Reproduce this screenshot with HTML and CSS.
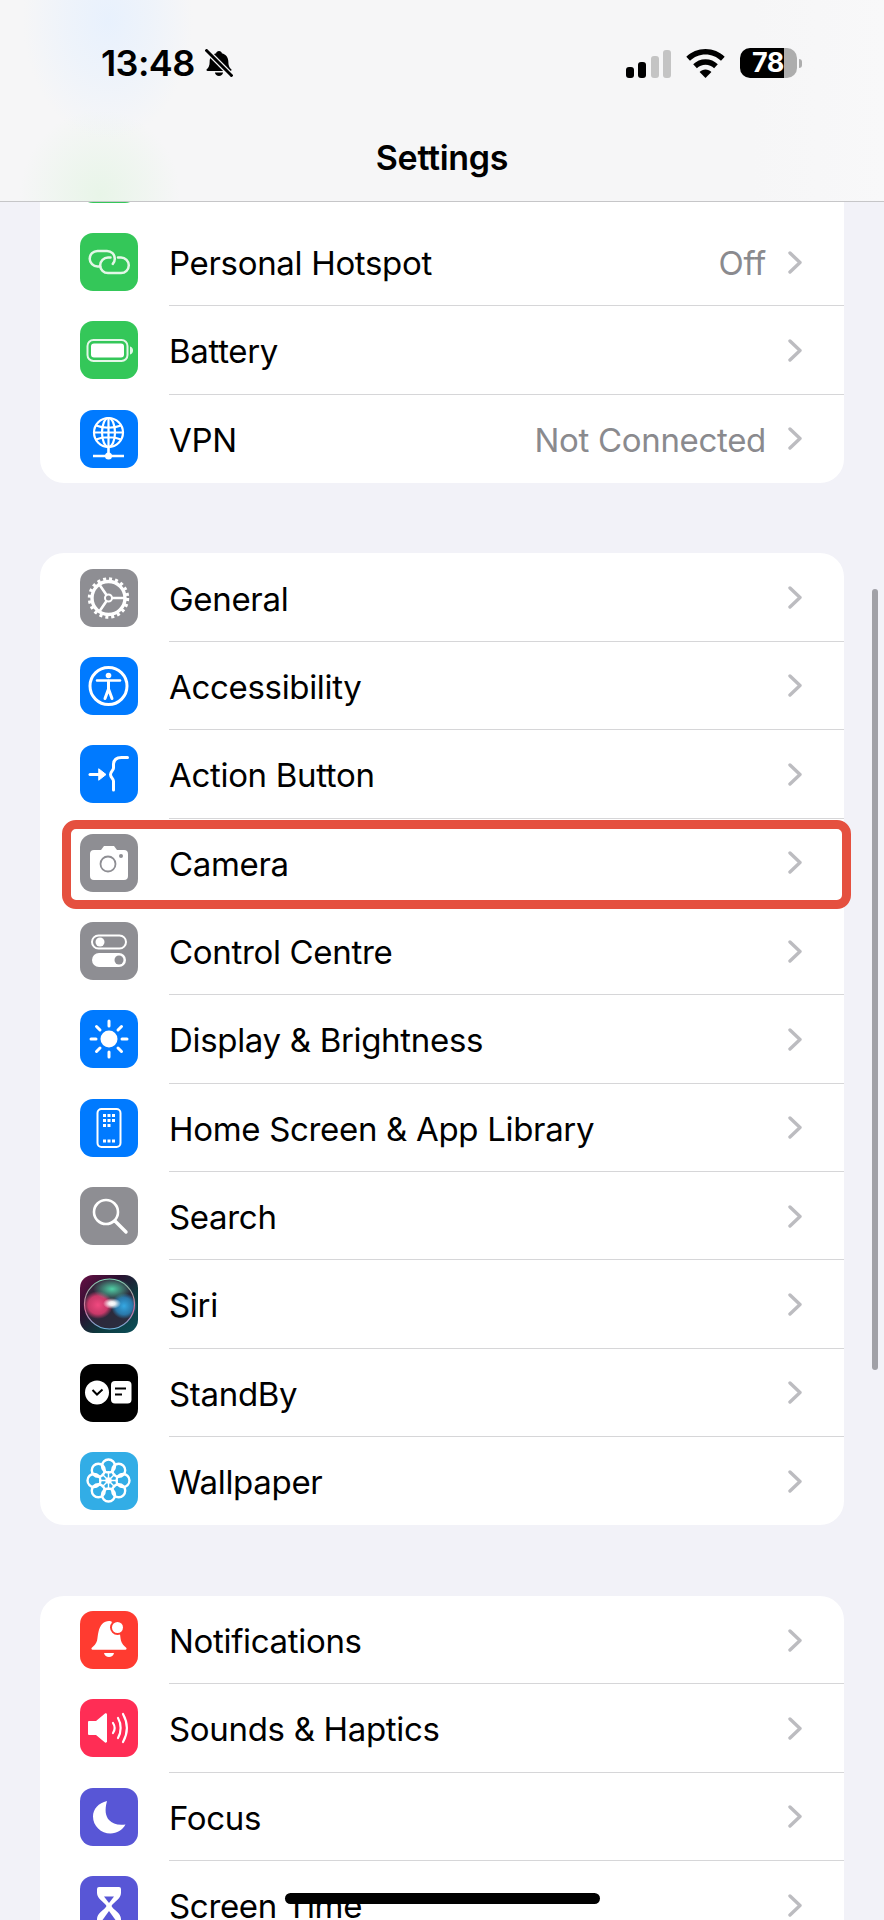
FILE: index.html
```html
<!DOCTYPE html>
<html lang="en">
<head>
<meta charset="utf-8">
<title>Settings</title>
<link rel="stylesheet" href="styles.css">
</head>
<body>
<div class="phone">
  <header class="nav">
    <div class="status">
      <div class="status-left">
        <span class="time">13:48</span>
        <svg class="bell" viewBox="2 0 24 28" preserveAspectRatio="none"><path d="M14 2c1.400 0 2.300 1 2.400 2.200C20 5.300 22 8.500 22 12.500c0 4 .8 6 2.500 7.800.6.700.2 1.700-.8 1.700H4.300c-1 0-1.400-1-.8-1.700C5.200 18.500 6 16.500 6 12.500 6 8.500 8 5.300 11.600 4.200 11.700 3 12.600 2 14 2zM10.500 23.500h7c-.3 2-1.700 3.500-3.500 3.500s-3.200-1.500-3.500-3.500z" fill="#000"/><path d="M2.500 0.500 25.500 27.500" stroke="#f6f6f7" stroke-width="5"/><path d="M2.500 0.500 25.500 27.500" stroke="#000" stroke-width="2.600"/></svg>
      </div>
      <div class="status-right">
        <div class="signal"><i class="b1"></i><i class="b2"></i><i class="b3"></i><i class="b4"></i></div>
        <svg class="wifi" viewBox="0 0 39 29"><path d="M19.500 0C27 0 33.700 3 38.700 7.800L35 11.800C31 7.900 25.500 5.500 19.500 5.500S8 7.900 4 11.800L.3 7.800C5.300 3 12 0 19.500 0z"/><path d="M19.500 10.200c4.800 0 9.100 1.900 12.300 5l-3.700 4c-2.200-2.200-5.300-3.500-8.600-3.500s-6.400 1.300-8.600 3.500l-3.700-4c3.200-3.100 7.500-5 12.300-5z"/><path d="M19.500 20.500c2.300 0 4.400.9 5.900 2.400L19.500 29l-5.900-6.100c1.500-1.500 3.600-2.400 5.900-2.400z"/></svg>
        <div class="battery"><div class="cell"><span class="level">78</span></div><i class="nub"></i></div>
      </div>
    </div>
    <h1 class="title">Settings</h1>
  </header>

  <main class="list">
    <section class="card card-first">
      <div class="row row-clipped">
        <div class="icon green"></div>
      </div>
      <div class="row">
        <div class="icon green">
          <svg viewBox="0 0 58 58" fill="none" stroke="#e3f7e7" stroke-width="2.500" stroke-linecap="round"><path d="M20 33.500H17.500a7.800 7.800 0 0 1 0-15.600H27a7.800 7.800 0 0 1 7.800 7.800c0 2-.8 3.800-2 5.200"/><path d="M38 24.500h3a7.800 7.800 0 0 1 0 15.600H28a7.800 7.800 0 0 1-7.800-7.800 7.800 7.800 0 0 1 7.800-7.800h2.500"/></svg>
        </div>
        <div class="body"><span class="label">Personal Hotspot</span><span class="value">Off</span><svg class="chev" viewBox="0 0 14 23"><path d="M2 2l10 9.500L2 21"/></svg></div>
      </div>
      <div class="row">
        <div class="icon green">
          <svg viewBox="0 0 58 58" fill="none"><rect x="7.500" y="19" width="40" height="21" rx="6" stroke="#e3f7e7" stroke-width="2"/><rect x="11" y="22.500" width="33" height="14" rx="3" fill="#fff"/><path d="M50 25.500c2 .5 3 2 3 4s-1 3.500-3 4z" fill="#e3f7e7"/></svg>
        </div>
        <div class="body"><span class="label">Battery</span><svg class="chev" viewBox="0 0 14 23"><path d="M2 2l10 9.500L2 21"/></svg></div>
      </div>
      <div class="row">
        <div class="icon blue">
          <svg viewBox="0 0 58 58" fill="none" stroke="#fff" stroke-width="2.200"><circle cx="28.500" cy="22.500" r="14.500"/><ellipse cx="28.500" cy="22.500" rx="6.500" ry="14.500"/><path d="M28.500 8v29M16 15.500c7 3 18 3 25 0M16 29.500c7-3 18-3 25 0M14 22.500h29"/><path d="M13 46h31M28.500 37v9" stroke-width="2.600"/><circle cx="28.500" cy="46" r="3.500" fill="#fff" stroke="none"/></svg>
        </div>
        <div class="body"><span class="label">VPN</span><span class="value">Not Connected</span><svg class="chev" viewBox="0 0 14 23"><path d="M2 2l10 9.500L2 21"/></svg></div>
      </div>
    </section>

    <section class="card">
      <div class="row">
        <div class="icon grey">
          <svg viewBox="0 0 58 58" fill="none" stroke="#fff"><circle cx="28.500" cy="29" r="16.500" stroke-width="3.400"/><circle cx="28.500" cy="29" r="19" stroke-width="3.400" stroke-dasharray="3.010 2.960"/><circle cx="28.500" cy="29" r="3.500" stroke-width="2"/><path d="M32 29H45M26.500 26 19 15M26.500 32 19 43" stroke-width="2.600"/></svg>
        </div>
        <div class="body"><span class="label">General</span><svg class="chev" viewBox="0 0 14 23"><path d="M2 2l10 9.500L2 21"/></svg></div>
      </div>
      <div class="row">
        <div class="icon blue">
          <svg viewBox="0 0 58 58" fill="none" stroke="#fff"><circle cx="28.500" cy="29" r="18.500" stroke-width="3"/><circle cx="28.500" cy="18.500" r="2.800" fill="#fff" stroke="none"/><path d="M17 23.500h23" stroke-width="2.500" stroke-linecap="round"/><path d="M28.500 24v8M28.500 32l-3.500 9.500M28.500 32l3.500 9.500" stroke-width="3" stroke-linecap="round"/></svg>
        </div>
        <div class="body"><span class="label">Accessibility</span><svg class="chev" viewBox="0 0 14 23"><path d="M2 2l10 9.500L2 21"/></svg></div>
      </div>
      <div class="row">
        <div class="icon blue">
          <svg viewBox="0 0 58 58" fill="none" stroke="#fff" stroke-linecap="round"><path d="M10 29.500h13" stroke-width="3"/><path d="M19 24l7 5.500-7 5.500z" fill="#fff" stroke-width="1" stroke-linejoin="round"/><path d="M33.500 45V36c0-2.500-3-3.500-3-6.500s3-4 3-6.500v-3c0-5 3-7.500 8-7.500h6" stroke-width="3"/></svg>
        </div>
        <div class="body"><span class="label">Action Button</span><svg class="chev" viewBox="0 0 14 23"><path d="M2 2l10 9.500L2 21"/></svg></div>
      </div>
      <div class="row row-marked">
        <div class="icon grey">
          <svg viewBox="0 0 58 58"><path d="M14 16h7l3-4h10l3 4h7a4 4 0 0 1 4 4v22a4 4 0 0 1-4 4H14a4 4 0 0 1-4-4V20a4 4 0 0 1 4-4z" fill="#fff"/><circle cx="28" cy="30" r="7.500" fill="none" stroke="#8e8e93" stroke-width="1.800"/><circle cx="41" cy="22" r="2" fill="#8e8e93"/></svg>
        </div>
        <div class="body"><span class="label">Camera</span><svg class="chev" viewBox="0 0 14 23"><path d="M2 2l10 9.500L2 21"/></svg></div>
      </div>
      <div class="row">
        <div class="icon grey">
          <svg viewBox="0 0 58 58"><rect x="12" y="13.500" width="34" height="13" rx="6.500" fill="none" stroke="#fff" stroke-width="2"/><circle cx="20" cy="20" r="4.500" fill="#fff"/><rect x="12" y="31" width="34" height="14" rx="7" fill="#fff"/><circle cx="39" cy="38" r="4.500" fill="#8e8e93"/></svg>
        </div>
        <div class="body"><span class="label">Control Centre</span><svg class="chev" viewBox="0 0 14 23"><path d="M2 2l10 9.500L2 21"/></svg></div>
      </div>
      <div class="row">
        <div class="icon blue">
          <svg viewBox="0 0 58 58" fill="#fff" stroke="#fff" stroke-width="3" stroke-linecap="round"><circle cx="29" cy="29" r="8.500" stroke="none"/><path d="M29 11v5M29 42v5M11 29h5M42 29h5M16.500 16.500l3.500 3.500M38 38l3.500 3.500M16.500 41.500l3.500-3.500M38 20l3.500-3.500"/></svg>
        </div>
        <div class="body"><span class="label">Display &amp; Brightness</span><svg class="chev" viewBox="0 0 14 23"><path d="M2 2l10 9.500L2 21"/></svg></div>
      </div>
      <div class="row">
        <div class="icon blue">
          <svg viewBox="0 0 58 58"><rect x="17.500" y="10" width="23" height="38" rx="4" fill="none" stroke="#fff" stroke-width="2"/><path d="M23 15h3v3h-3zM27.500 15h3v3h-3zM32 15h3v3h-3zM23 20h3v3h-3zM27.500 20h3v3h-3zM32 20h3v3h-3zM23 25h3v3h-3zM27.500 25h3v3h-3zM23 40.500h3v3h-3zM27.500 40.500h3v3h-3zM32 40.500h3v3h-3z" fill="#fff"/></svg>
        </div>
        <div class="body"><span class="label">Home Screen &amp; App Library</span><svg class="chev" viewBox="0 0 14 23"><path d="M2 2l10 9.500L2 21"/></svg></div>
      </div>
      <div class="row">
        <div class="icon grey">
          <svg viewBox="0 0 58 58" fill="none" stroke="#fff"><circle cx="26" cy="25" r="12" stroke-width="2.600"/><path d="M35 34l11 11" stroke-width="3.400" stroke-linecap="round"/></svg>
        </div>
        <div class="body"><span class="label">Search</span><svg class="chev" viewBox="0 0 14 23"><path d="M2 2l10 9.500L2 21"/></svg></div>
      </div>
      <div class="row">
        <div class="icon siri">
          <svg viewBox="0 0 58 58" fill="none"><defs><radialGradient id="sp"><stop offset="0" stop-color="#f0497f"/><stop offset=".65" stop-color="#d93b6e" stop-opacity=".9"/><stop offset="1" stop-color="#d93b6e" stop-opacity="0"/></radialGradient><radialGradient id="sb"><stop offset="0" stop-color="#35a9e4"/><stop offset=".65" stop-color="#2a86bd" stop-opacity=".85"/><stop offset="1" stop-color="#2a86bd" stop-opacity="0"/></radialGradient><radialGradient id="sw"><stop offset="0" stop-color="#fff"/><stop offset=".35" stop-color="#fff" stop-opacity=".9"/><stop offset="1" stop-color="#fff" stop-opacity="0"/></radialGradient><radialGradient id="sg"><stop offset="0" stop-color="#4fd0a5"/><stop offset="1" stop-color="#4fd0a5" stop-opacity="0"/></radialGradient><linearGradient id="sr" x1="0" y1="0" x2="0" y2="1"><stop offset="0" stop-color="#7fd6b4"/><stop offset=".6" stop-color="#d86a96"/><stop offset="1" stop-color="#6fb6e0"/></linearGradient></defs><circle cx="29.500" cy="29" r="25" fill="#33283c" fill-opacity=".8"/><ellipse cx="18" cy="30" rx="15" ry="14" fill="url(#sp)"/><ellipse cx="44" cy="31" rx="13" ry="13" fill="url(#sb)"/><ellipse cx="32" cy="14" rx="19" ry="11" fill="url(#sg)"/><ellipse cx="32" cy="28.500" rx="9" ry="5.500" fill="url(#sw)"/><circle cx="29.500" cy="29" r="25" stroke="url(#sr)" stroke-width="1.200"/></svg>
        </div>
        <div class="body"><span class="label">Siri</span><svg class="chev" viewBox="0 0 14 23"><path d="M2 2l10 9.500L2 21"/></svg></div>
      </div>
      <div class="row">
        <div class="icon black">
          <svg viewBox="0 0 58 58"><circle cx="17" cy="28.500" r="12" fill="#fff"/><path d="M12.500 26l4.500 4.500 5.500-5" fill="none" stroke="#000" stroke-width="2"/><rect x="31" y="17" width="20.500" height="22.500" rx="4" fill="#fff"/><path d="M35 24.500h11M35 30.500h7" stroke="#000" stroke-width="2.200"/></svg>
        </div>
        <div class="body"><span class="label">StandBy</span><svg class="chev" viewBox="0 0 14 23"><path d="M2 2l10 9.500L2 21"/></svg></div>
      </div>
      <div class="row">
        <div class="icon sky">
          <svg viewBox="0 0 58 58" fill="none" stroke="#fff" stroke-width="2.400"><circle cx="28.500" cy="14" r="6.500"/><circle cx="38.700" cy="18.300" r="6.500"/><circle cx="43" cy="28.500" r="6.500"/><circle cx="38.700" cy="38.700" r="6.500"/><circle cx="28.500" cy="43" r="6.500"/><circle cx="18.300" cy="38.700" r="6.500"/><circle cx="14" cy="28.500" r="6.500"/><circle cx="18.300" cy="18.300" r="6.500"/><path d="M28.500 19v19M19 28.500h19M21.800 21.800l13.400 13.400M21.800 35.200l13.400-13.400" stroke-width="1.400"/><circle cx="28.500" cy="28.500" r="3.200" fill="#fff" stroke="none"/></svg>
        </div>
        <div class="body"><span class="label">Wallpaper</span><svg class="chev" viewBox="0 0 14 23"><path d="M2 2l10 9.500L2 21"/></svg></div>
      </div>
    </section>

    <section class="card">
      <div class="row">
        <div class="icon red">
          <svg viewBox="0 0 58 58"><path d="M29 10c1.500 0 3 .7 4 1.700 2 2 5 5 6.500 9 .8 3 .8 6 1.500 9 .8 3 3 5 5.200 7 .8.800.3 2-.8 2H12.600c-1.100 0-1.600-1.200-.8-2 2.200-2 4.400-4 5.200-7 .7-3 .7-6 1.500-9C20 14 24 10 29 10z" fill="#fff"/><path d="M24 42h10c-.5 2.500-2.500 4-5 4s-4.500-1.500-5-4z" fill="#fff"/><circle cx="37.500" cy="16.500" r="7.500" fill="#ff3b30"/><circle cx="37.500" cy="16.500" r="5.500" fill="#fff"/></svg>
        </div>
        <div class="body"><span class="label">Notifications</span><svg class="chev" viewBox="0 0 14 23"><path d="M2 2l10 9.500L2 21"/></svg></div>
      </div>
      <div class="row">
        <div class="icon pink">
          <svg viewBox="0 0 58 58" fill="none" stroke="#fff" stroke-linecap="round"><path d="M9 22h7l9-7.500c.7-.5 2 0 2 1v27c0 1-1.300 1.500-2 1L16 36H9a1 1 0 0 1-1-1V23a1 1 0 0 1 1-1z" fill="#fff" stroke="none"/><path d="M33 24c2 3 2 7 0 10" stroke-width="2.200"/><path d="M38 19c3.500 6 3.500 14 0 20" stroke-width="2.200"/><path d="M43 15c5 9 5 19 0 28" stroke-width="2.200"/></svg>
        </div>
        <div class="body"><span class="label">Sounds &amp; Haptics</span><svg class="chev" viewBox="0 0 14 23"><path d="M2 2l10 9.500L2 21"/></svg></div>
      </div>
      <div class="row">
        <div class="icon indigo">
          <svg viewBox="0 0 58 58"><path d="M27 13c-2.500 9-1.500 15 2 19 3.500 4 9 5.500 16.500 4.500C42.500 42 37 45.500 30.500 45.500 21 45.500 13 38 13 28.500 13 21 18.500 15 27 13z" fill="#fff"/></svg>
        </div>
        <div class="body"><span class="label">Focus</span><svg class="chev" viewBox="0 0 14 23"><path d="M2 2l10 9.500L2 21"/></svg></div>
      </div>
      <div class="row">
        <div class="icon indigo">
          <svg viewBox="0 0 58 58"><path d="M19 11h20a2 2 0 0 1 2 2v4c0 6-7.500 9-9.500 13 2 4 9.500 7 9.500 13v3a2 2 0 0 1-2 2H19a2 2 0 0 1-2-2v-3c0-6 7.500-9 9.500-13-2-4-9.500-7-9.500-13v-4a2 2 0 0 1 2-2z" fill="#fff"/><path d="M24 20.500h10l-5 6.500z" fill="#5856d6"/><path d="M29 35l-6.500 9h13z" fill="#5856d6"/></svg>
        </div>
        <div class="body"><span class="label">Screen Time</span><svg class="chev" viewBox="0 0 14 23"><path d="M2 2l10 9.500L2 21"/></svg></div>
      </div>
    </section>
  </main>

  <div class="scrollbar"></div>
  <div class="home"></div>
</div>
</body>
</html>
```
FILE: styles.css
```css
* { box-sizing: border-box; }
html, body { margin: 0; padding: 0; }
body { width: 884px; height: 1920px; overflow: hidden; background: #f2f2f8; font-family: Inter, "Liberation Sans", sans-serif; color: #000; }
.phone { position: relative; width: 884px; height: 1920px; overflow: hidden; display: flex; flex-direction: column; }

.nav { flex: none; height: 202px; padding: 48px 82px 0 101px; border-bottom: 1px solid #c6c6c8; position: relative; z-index: 2;
  background:
    radial-gradient(ellipse 85px 120px at 108px 20px, #e8f1fd 0%, rgba(232,241,253,.55) 50%, rgba(232,241,253,0) 100%),
    radial-gradient(ellipse 80px 85px at 100px 195px, #e8f5e8 0%, rgba(232,245,232,.45) 55%, rgba(232,245,232,0) 100%),
    linear-gradient(90deg, #f6f6f7 0%, #f6f6f7 85%, #f8f8f9 100%); }
.status { display: flex; justify-content: space-between; align-items: center; height: 30px; }
.status-left { display: flex; align-items: center; gap: 10px; }
.time { font-size: 36px; font-weight: 600; line-height: 30px; letter-spacing: -.6px; }
.bell { width: 28px; height: 28px; display: block; }
.status-right { display: flex; align-items: flex-end; gap: 15px; }
.signal { display: flex; align-items: flex-end; gap: 4.500px; height: 29px; }
.signal i { display: block; width: 8px; border-radius: 3px; background: #000; }
.signal .b1 { height: 11px; }
.signal .b2 { height: 16px; }
.signal .b3 { height: 22px; background: #c4c4c4; }
.signal .b4 { height: 28px; background: #c4c4c4; }
.wifi { width: 39px; height: 29px; display: block; }
.battery { display: flex; align-items: center; gap: 2px; }
.cell { width: 57px; height: 30px; border-radius: 10px; background: linear-gradient(90deg, #000 0 77%, #adadad 77% 100%); display: flex; align-items: center; padding-left: 12px; }
.level { font-size: 27px; font-weight: 700; line-height: 30px; color: #fff; letter-spacing: -.5px; }
.nub { display: block; width: 3px; height: 9px; border-radius: 0 3px 3px 0; background: #adadad; }
.title { margin: 58px -82px 0 -101px; text-align: center; font-size: 34px; font-weight: 600; line-height: 44px; letter-spacing: -.3px; }

.list { flex: 1; min-height: 0; padding: 0 40px; display: flex; flex-direction: column; gap: 70.500px; overflow: hidden; }
.card { flex: none; background: #fff; border-radius: 24px; }
.card-first { margin-top: -72.500px; }
.row { position: relative; display: flex; align-items: center; gap: 31px; height: 88.360px; padding-left: 40px; }
.icon { flex: none; width: 58px; height: 58px; border-radius: 13px; overflow: hidden; }
.icon svg { display: block; width: 58px; height: 58px; }
.green { background: #34c759; }
.blue { background: #007aff; }
.grey { background: #8e8e93; }
.black { background: #000; }
.sky { background: #32ade6; }
.red { background: #ff3b30; }
.pink { background: #ff2d55; }
.indigo { background: #5856d6; }
.siri { background: linear-gradient(135deg, #6a0f45 0%, #2a1030 35%, #0d3a3e 65%, #0c4f5a 100%); }
.body { flex: 1; min-width: 0; align-self: stretch; display: flex; align-items: center; padding-right: 42px; box-shadow: inset 0 -1px 0 #d6d6d8; }
.card .row:last-child .body { box-shadow: none; }
.label { flex: 1; font-size: 33px; line-height: 40px; padding-top: 2px; letter-spacing: -.32px; white-space: nowrap; }
.value { font-size: 33px; line-height: 40px; padding-top: 2px; color: #8a8a8e; letter-spacing: -.32px; margin-right: 22px; }
.chev { flex: none; width: 14px; height: 23px; fill: none; stroke: #bcbcc0; stroke-width: 3.400px; stroke-linecap: round; stroke-linejoin: round; }
.row-marked::after { content: ""; position: absolute; left: 22px; right: -7px; top: 1.500px; bottom: -2.500px; border: 9px solid #e5503f; border-radius: 14px; z-index: 1; pointer-events: none; }

.scrollbar { position: absolute; left: 872px; top: 589px; width: 6px; height: 781px; border-radius: 3px; background: #a1a1a7; }
.home { position: absolute; left: 285px; top: 1893px; width: 315px; height: 11px; border-radius: 6px; background: #000; }
```
